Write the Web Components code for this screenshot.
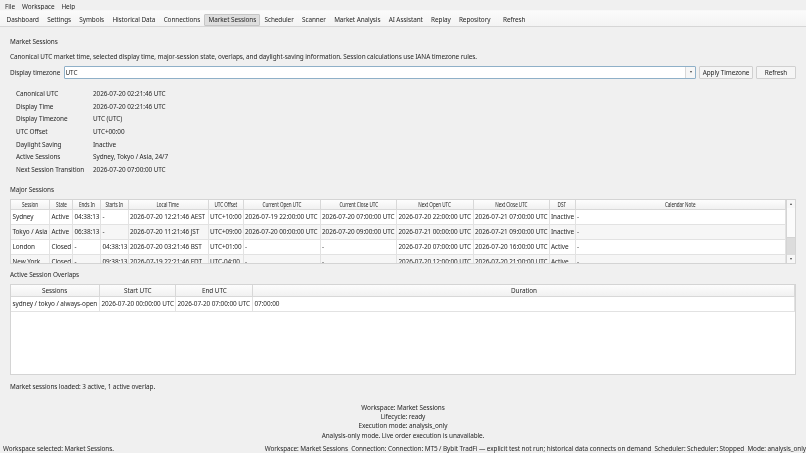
<!DOCTYPE html>
<html><head><meta charset="utf-8"><style>
html,body{margin:0;padding:0;width:806px;height:453px;overflow:hidden;background:#f0f0f0}
body{font:6.4px/9px "Noto Sans","Open Sans",sans-serif;letter-spacing:-.07px;color:#262626}
</style></head><body>
<app-shell></app-shell>
<script>
const def=(name,css,html)=>{customElements.define(name,class extends HTMLElement{
  connectedCallback(){ if(this.shadowRoot)return; const r=this.attachShadow({mode:'open'});
    r.innerHTML=`<style>${css}</style>${html}`; }
});};

def('menu-bar',`:host{display:flex;flex:none;height:10px;align-items:center;padding:2px 0 0 5px;box-sizing:border-box;gap:7px;background:#f0f0f0}u{text-decoration:none;display:inline-block;line-height:7px;height:7px;box-shadow:0 .8px 0 #555}span{display:block}`,
 `<span><u>F</u>ile</span><span><u>W</u>orkspace</span><span><u>H</u>elp</span>`);

def('tool-bar',`:host{display:flex;flex:none;height:17px;align-items:center;padding:2px 0 0 2.4px;background:linear-gradient(#fbfbfb,#f3f3f3);border-bottom:1px solid #d6d6d6;box-sizing:border-box;border-top:1px solid #f8f8f8}
 span{display:block;padding:0 4.15px;height:12px;line-height:12px;box-sizing:border-box;white-space:nowrap}
 .on{background:#dedede;border:1px solid #c6c6c6;border-radius:1px;padding:0 3.15px;line-height:10.5px}
 .r{margin-left:4.3px}`,
 ['Dashboard','Settings','Symbols','Historical Data','Connections','Market Sessions','Scheduler','Scanner','Market Analysis','AI Assistant','Replay','Repository'].map(t=>`<span class="${t==='Market Sessions'?'on':''}">${t}</span>`).join('')+`<span class="r">Refresh</span>`);

def('tz-row',`:host{display:flex;flex:none;align-items:center;height:13px;gap:3px}
 .c{flex:1;display:flex;height:13px;background:#fff;border:1px solid #8fb0c8;border-radius:1px;box-sizing:border-box;align-items:center;padding-left:1px}
 .t{flex:1}.a{width:9px;height:11px;border-left:1px solid #d8d8d8;display:flex;align-items:center;justify-content:center;background:#f6f6f6}
 .a i{border-left:1.5px solid transparent;border-right:1.5px solid transparent;border-top:2px solid #444;display:block}
 b{font-weight:400;display:block;height:13px;line-height:11px;border:1px solid #d0d0d0;border-radius:1px;background:#f5f5f5;box-sizing:border-box;text-align:center}
 label{white-space:nowrap;width:50.5px}`,
 `<label>Display timezone</label><div class="c"><span class="t">UTC</span><span class="a"><i></i></span></div><b style="width:54px">Apply Timezone</b><b style="width:40px">Refresh</b>`);

def('info-grid',`:host{display:grid;flex:none;grid-template-columns:77px 1fr;grid-auto-rows:12.6px;align-items:center;padding-left:6px}`,
 [['Canonical UTC','2026-07-20 02:21:46 UTC'],['Display Time','2026-07-20 02:21:46 UTC'],['Display Timezone','UTC (UTC)'],['UTC Offset','UTC+00:00'],['Daylight Saving','Inactive'],['Active Sessions','Sydney, Tokyo / Asia, 24/7'],['Next Session Transition','2026-07-20 07:00:00 UTC']].map(([a,b])=>`<span>${a}</span><span>${b}</span>`).join(''));

const row=(cells,cls='')=>`<div class="row ${cls}">${cells.map(c=>`<div class="cell">${c}</div>`).join('')}</div>`;

def('major-table',`:host{display:flex;flex:none;height:65px;border:1px solid #d4d4d4;box-sizing:border-box;background:#fff;overflow:hidden}
 .main{flex:1;overflow:hidden;min-width:0}
 .head,.row{display:grid;grid-template-columns:39px 23px 28px 27.5px 80px 35px 77px 76.5px 76.5px 76px 26px 1fr}
 .head{height:10px;background:linear-gradient(#fdfdfd,#f1f1f1);border-bottom:1px solid #d8d8d8;box-sizing:border-box}
 .head div{border-right:1px solid #d8d8d8;text-align:center;line-height:9px;overflow:hidden;white-space:nowrap}
 .head span{display:inline-block;transform:scaleX(.72);transform-origin:center}
 .row{height:15px;border-bottom:1px solid #e2e2e2;box-sizing:border-box}
 .row.alt{background:#f6f6f6}
 .cell{border-right:1px solid #e2e2e2;padding-left:1.5px;line-height:14px;white-space:nowrap;overflow:hidden}
 .sb{width:8px;border-left:1px solid #d4d4d4;background:#f0f0f0;display:flex;flex-direction:column;justify-content:space-between}
 .btn{height:8px;flex:none;background:#f7f7f7;display:flex;align-items:center;justify-content:center}
 .up{border-left:1.5px solid transparent;border-right:1.5px solid transparent;border-bottom:2px solid #444}
 .dn{border-left:1.5px solid transparent;border-right:1.5px solid transparent;border-top:2px solid #444}
 .track{flex:1;display:flex;flex-direction:column}.th{flex:0 0 29px;background:#fbfbfb;border-bottom:1px solid #d4d4d4}.rest{flex:1;background:#dcdcdc}`,
 `<div class="main"><div class="head">${['Session','State','Ends In','Starts In','Local Time','UTC Offset','Current Open UTC','Current Close UTC','Next Open UTC','Next Close UTC','DST','Calendar Note'].map(h=>`<div><span>${h}</span></div>`).join('')}</div>
 ${row(['Sydney','Active','04:38:13','-','2026-07-20 12:21:46 AEST','UTC+10:00','2026-07-19 22:00:00 UTC','2026-07-20 07:00:00 UTC','2026-07-20 22:00:00 UTC','2026-07-21 07:00:00 UTC','Inactive','-'])}
 ${row(['Tokyo / Asia','Active','06:38:13','-','2026-07-20 11:21:46 JST','UTC+09:00','2026-07-20 00:00:00 UTC','2026-07-20 09:00:00 UTC','2026-07-21 00:00:00 UTC','2026-07-21 09:00:00 UTC','Inactive','-'],'alt')}
 ${row(['London','Closed','-','04:38:13','2026-07-20 03:21:46 BST','UTC+01:00','-','-','2026-07-20 07:00:00 UTC','2026-07-20 16:00:00 UTC','Active','-'])}
 ${row(['New York','Closed','-','09:38:13','2026-07-19 22:21:46 EDT','UTC-04:00','-','-','2026-07-20 12:00:00 UTC','2026-07-20 21:00:00 UTC','Active','-'],'alt')}
 </div><div class="sb"><div class="btn"><i class="up"></i></div><div class="track"><div class="th"></div><div class="rest"></div></div><div class="btn"><i class="dn"></i></div></div>`);

def('overlap-table',`:host{display:block;flex:none;height:91px;border:1px solid #d4d4d4;box-sizing:border-box;background:#fff;overflow:hidden}
 .head,.row{display:grid;grid-template-columns:89px 76px 77px 1fr}
 .head{height:12px;background:linear-gradient(#fdfdfd,#f1f1f1);border-bottom:1px solid #d8d8d8;box-sizing:border-box}
 .head div{border-right:1px solid #d8d8d8;text-align:center;line-height:11px}
 .head span{display:inline-block;transform:scaleX(.999)}
 .row{height:15px;border-bottom:1px solid #e2e2e2;box-sizing:border-box}
 .cell{border-right:1px solid #e2e2e2;padding-left:1.5px;line-height:14px;white-space:nowrap;overflow:hidden}`,
 `<div class="head"><div><span>Sessions</span></div><div><span>Start UTC</span></div><div><span>End UTC</span></div><div><span>Duration</span></div></div>${row(['sydney / tokyo / always-open','2026-07-20 00:00:00 UTC','2026-07-20 07:00:00 UTC','07:00:00'])}`);

def('center-status',`:host{display:flex;flex:none;flex-direction:column;align-items:center;line-height:9.4px}`,
 `<span>Workspace: Market Sessions</span><span>Lifecycle: ready</span><span>Execution mode: analysis_only</span><span>Analysis-only mode. Live order execution is unavailable.</span>`);

def('status-bar',`:host{display:flex;flex:none;justify-content:space-between;height:10px;line-height:11px;padding-left:3px;white-space:nowrap}`,
 `<span>Workspace selected: Market Sessions.</span><span>Workspace: Market Sessions&nbsp; Connection: Connection: MT5 / Bybit TradFi — explicit test not run; historical data connects on demand&nbsp; Scheduler: Scheduler: Stopped&nbsp; Mode: analysis_only</span>`);

def('app-shell',`:host{display:flex;flex-direction:column;width:806px;height:453px;filter:blur(.25px)}
 main{display:flex;flex-direction:column;padding:0 10px;flex:1;min-height:0}
 p{margin:0;flex:none}
 .title{margin-top:9.5px;height:9px}
 .desc{margin-top:6px;height:9px;white-space:nowrap}
 tz-row{margin-top:5px}
 info-grid{margin-top:9px}
 .h2{margin-top:9px;height:9px}
 major-table{margin-top:5.5px}
 .h3{margin-top:6px;height:9px}
 overlap-table{margin-top:5px}
 .msg{margin-top:6.5px;height:9px}
 center-status{margin-top:12px}`,
 `<menu-bar></menu-bar><tool-bar></tool-bar><main>
 <p class="title">Market Sessions</p>
 <p class="desc">Canonical UTC market time, selected display time, major-session state, overlaps, and daylight-saving information. Session calculations use IANA timezone rules.</p>
 <tz-row></tz-row><info-grid></info-grid>
 <p class="h2">Major Sessions</p><major-table></major-table>
 <p class="h3">Active Session Overlaps</p><overlap-table></overlap-table>
 <p class="msg">Market sessions loaded: 3 active, 1 active overlap.</p>
 <center-status></center-status></main><status-bar></status-bar>`);
</script></body></html>
